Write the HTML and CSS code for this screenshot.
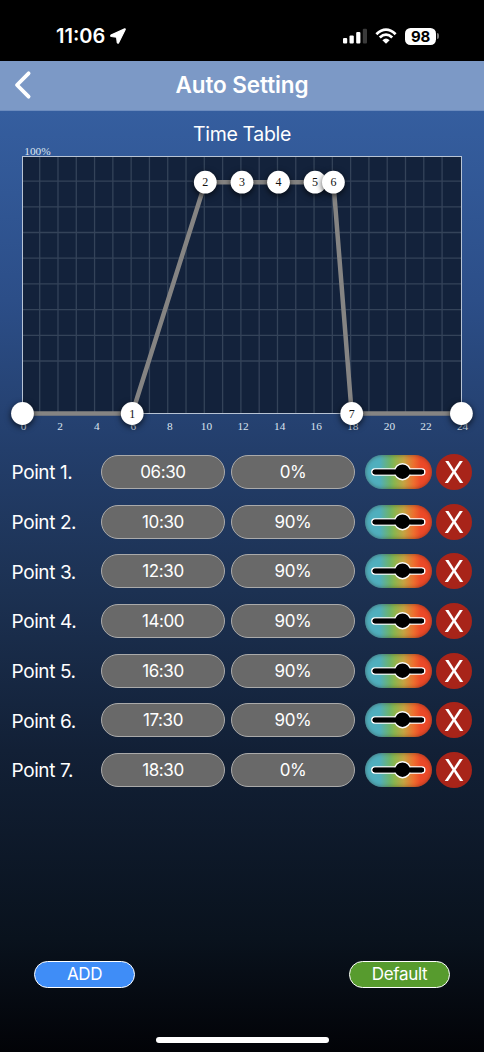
FILE: index.html
```html
<!DOCTYPE html>
<html lang="en">
<head>
<meta charset="utf-8">
<title>Auto Setting</title>
<link rel="stylesheet" href="styles.css">
</head>
<body>
<div class="screen">
  <div class="status">
    <div class="status-left">
      <span class="clock">11:06</span>
      <svg class="location" width="16" height="16" viewBox="0 0 16 16"><path d="M14.7 .9 L1 7.1 Q.4 7.9 1.2 8.5 L6.6 9.2 L7.3 14.7 Q7.9 15.5 8.6 14.8 L15.2 1.4 Q15.3 .8 14.7 .9Z" fill="#fff" stroke="#fff" stroke-width="1.2" stroke-linejoin="round"/></svg>
    </div>
    <div class="status-right">
      <svg width="25" height="16" viewBox="0 0 25 16"><g fill="#fff"><rect x="0" y="10" width="4.2" height="5.6" rx="1.1"/><rect x="6.5" y="7.4" width="4.3" height="8.2" rx="1.1"/><rect x="13.2" y="4" width="4.2" height="11.6" rx="1.1"/></g><rect x="19.8" y=".7" width="4.2" height="14.9" rx="1.1" fill="#3a3a3a"/></svg>
      <svg class="wifi" width="22" height="16" viewBox="0 0 22 16"><g fill="none" stroke="#fff" stroke-width="2.8"><path d="M1.4 6.2 Q11 -3 20.6 6.2"/><path d="M4.8 9.6 Q11 3.7 17.2 9.6"/></g><path d="M7.4 12.2 Q11 9 14.6 12.2 L11 15.7Z" fill="#fff"/></svg>
      <span class="battery">98</span><span class="battery-cap"></span>
    </div>
  </div>
  <header class="header">
    <svg class="back" width="20" height="30" viewBox="0 0 20 30"><path d="M16.6 3.3 L5 15 L16.6 26.7" fill="none" stroke="#fff" stroke-width="3.8" stroke-linecap="round" stroke-linejoin="round"/></svg>
    <h1 class="title">Auto Setting</h1>
  </header>
  <main class="content">
    <h2 class="subtitle">Time Table</h2>
    <svg class="chart" id="chart" width="484" height="292" viewBox="0 145 484 292"></svg>
    <div class="points" id="points"></div>
    <div class="actions">
      <button class="action add">ADD</button>
      <button class="action default">Default</button>
    </div>
    <div class="home"></div>
  </main>
</div>
<script src="app.js"></script>
</body>
</html>
```
FILE: styles.css
```css
* { box-sizing: border-box; }
body { margin: 0; background: #000; font-family: Inter, "Liberation Sans", sans-serif; color: #fff; }
.screen { width: 484px; height: 1052px; display: flex; flex-direction: column; overflow: hidden; }
.status { height: 61px; background: #000; display: flex; justify-content: space-between; align-items: center; padding: 11px 45px 0 56px; }
.status-left, .status-right { display: flex; align-items: center; }
.clock { font-size: 20px; font-weight: 600; letter-spacing: 0; line-height: 24px; width: 50px; white-space: nowrap; }
.location { margin-left: 4px; }
.wifi { margin: 0 8px 0 7px; }
.battery { width: 31px; height: 17px; border-radius: 5.5px; background: #fff; color: #000; font-size: 15px; font-weight: 700; line-height: 17px; text-align: center; letter-spacing: -0.2px; }
.battery-cap { width: 2px; height: 6px; margin-left: 1px; border-radius: 0 2px 2px 0; background: #777; }
.header { height: 50px; display: grid; grid-template-columns: 52px 1fr 52px; align-items: center; background: #7c99c6; border-bottom: 1px solid #6c8cbe; }
.back { margin: -2px 0 0 12px; }
.title { margin: -2px 0 0; font-size: 22.5px; font-weight: 600; text-align: center; letter-spacing: -0.1px; }
.content { height: 941px; display: flex; flex-direction: column; background: linear-gradient(#355e9f 0%, #2c4e88 20%, #233e6b 36%, #1c3152 51%, #122036 68%, #09121d 88%, #020307 100%); }
.subtitle { margin: 0; height: 34px; padding-top: 11px; font-size: 19.5px; font-weight: 400; line-height: 24px; text-align: center; letter-spacing: -0.35px; }
.chart { display: block; flex: none; font-family: "Liberation Serif", serif; }
.axis { font-size: 11.3px; fill: #dce4ef; }
.point-label { font-size: 12px; fill: #111; text-anchor: middle; }
.node { fill: #fff; filter: drop-shadow(0 2px 3px rgba(0, 0, 0, .7)); }
.points { display: grid; grid-auto-rows: 49.7px; padding-top: 10px; }
.row { display: grid; grid-template-columns: 89.5px 124px 123.5px 68px 36px; column-gap: 0; padding-left: 11.5px; align-items: center; }
.name { font-size: 19px; letter-spacing: -0.4px; padding-top: 2px; }
.pill { width: 124px; height: 34px; border: 1px solid #aaa; border-radius: 17px; background: #696969; font-size: 17px; line-height: 33px; text-align: center; letter-spacing: -0.4px; }
.pill.level { margin-left: 6px; }
.slider { width: 67px; height: 34px; margin-left: 16.5px; border-radius: 17px; background: linear-gradient(90deg, #50afc0 0%, #50afbd 22%, #6db36b 37%, #8bb54e 44%, #c5a442 58%, #ee6d2e 73%, #ec4a28 83%, #eb4828 100%); box-shadow: inset 0 0 4px rgba(50, 30, 20, .5); }
.slider svg { display: block; margin-left: -.5px; }
.remove { width: 36px; height: 36px; margin-left: 19.5px; border-radius: 50%; background: #a82419; font-size: 30px; line-height: 36px; text-align: center; }
.remove-mark { display: block; transform: scaleX(.98); }
.actions { display: flex; justify-content: space-between; margin: auto 34px 49px; }
.action { width: 101px; height: 27px; padding: 0; border: 1px solid #fff; border-radius: 14px; color: #fff; font: 17px/25px Inter, sans-serif; letter-spacing: -0.35px; }
.add { background: #3f8df7; }
.default { background: #579b2e; }
.home { flex: none; width: 173px; height: 6px; margin: 0 auto 9px; border-radius: 3px; background: #fff; }
```
FILE: app.js
```js
const left = 22.5, right = 461.5, top_ = 156.5, bottom = 413.5;
let s = `<rect x="${left}" y="${top_}" width="439" height="257" fill="#13223b"/>`;
let grid = '';
for (let i = 0; i < 23; i++) grid += `M${(39.7 + i * 18.29).toFixed(2)} ${top_}V${bottom}`;
for (let i = 0; i < 8; i++) grid += `M${left} ${(181.1 + i * 25.7).toFixed(2)}H${right}`;
s += `<path d="${grid}" stroke="#344359" stroke-width="1.3" fill="none"/>`;
s += `<rect x="${left}" y="${top_}" width="439" height="257" fill="none" stroke="#b8c4d5"/>`;
s += `<text class="axis" x="24.3" y="155">100%</text>`;
for (let h = 0; h <= 24; h += 2) s += `<text class="axis" text-anchor="middle" x="${23.6 + h * 18.29}" y="429.8">${h}</text>`;
const nodes = [[22.5, 413.5, ''], [132.2, 413.5, 1], [205.3, 182.2, 2], [242, 182.2, 3], [278.5, 182.2, 4], [315.1, 182.2, 5], [333.4, 182.2, 6], [351.7, 413.5, 7], [461.4, 413.5, '']];
s += `<polyline points="${nodes.map(n => n[0] + ',' + n[1]).join(' ')}" fill="none" stroke="#858483" stroke-width="4.5"/>`;
for (const [x, y, label] of nodes) s += `<circle class="node" cx="${x}" cy="${y}" r="11.4"/><text class="point-label" x="${x}" y="${y + 4}">${label}</text>`;
document.getElementById('chart').innerHTML = s;

const rows = [['06:30', '0%'], ['10:30', '90%'], ['12:30', '90%'], ['14:00', '90%'], ['16:30', '90%'], ['17:30', '90%'], ['18:30', '0%']];
document.getElementById('points').innerHTML = rows.map(([time, level], i) => `
<div class="row">
  <span class="name">Point ${i + 1}.</span>
  <div class="pill">${time}</div>
  <div class="pill level">${level}</div>
  <div class="slider"><svg width="67" height="34" viewBox="0 0 67 34"><rect x="6.8" y="14" width="53" height="6" rx="3" stroke="#fff" stroke-width="1.4"/><circle cx="37.5" cy="16.7" r="8" stroke="#fff" stroke-width="1.4"/><rect x="7.5" y="14.6" width="51.6" height="4.8" rx="2.4"/></svg></div>
  <div class="remove"><span class="remove-mark">X</span></div>
</div>`).join('');
```
